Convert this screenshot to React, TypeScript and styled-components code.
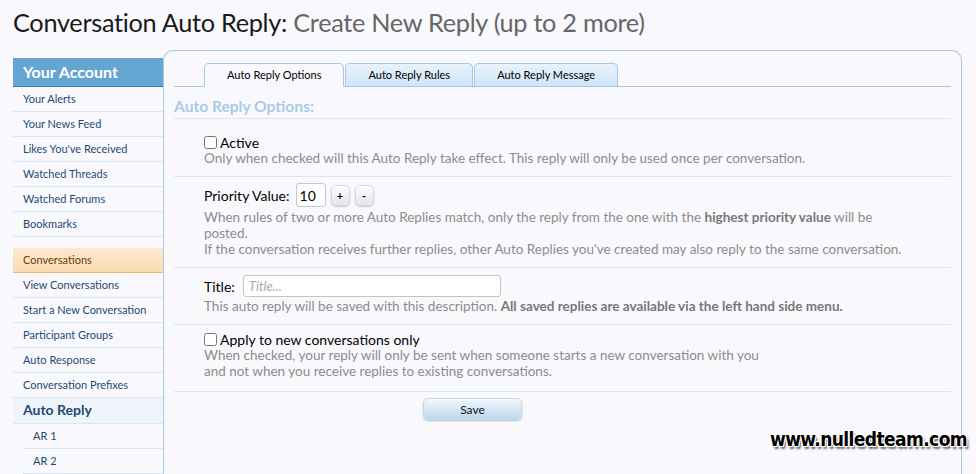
import { useState } from "react";
import styled, { createGlobalStyle } from "styled-components";

const GlobalStyle = createGlobalStyle`
  body {
    margin: 0;
    background: #f9f9fd;
    font-family: "Lato", "DejaVu Sans", sans-serif;
    color: #000;
  }
`;

const accountLinks = [
  "Your Alerts",
  "Your News Feed",
  "Likes You've Received",
  "Watched Threads",
  "Watched Forums",
  "Bookmarks",
];

const conversationLinks = [
  "View Conversations",
  "Start a New Conversation",
  "Participant Groups",
  "Auto Response",
  "Conversation Prefixes",
];

const tabs = ["Auto Reply Options", "Auto Reply Rules", "Auto Reply Message"];

const App = () => {
  const [priority, setPriority] = useState(10);
  const [activeTab, setActiveTab] = useState(0);

  return (
    <Page>
      <GlobalStyle />
      <Title>
        Conversation Auto Reply: <Sub>Create New Reply (up to 2 more)</Sub>
      </Title>
      <Body>
        <Sidebar>
          <SideHeader>Your Account</SideHeader>
          {accountLinks.map((l) => (
            <SideLink key={l}>{l}</SideLink>
          ))}
          <SideGap />
          <SideSection>Conversations</SideSection>
          {conversationLinks.map((l) => (
            <SideLink key={l}>{l}</SideLink>
          ))}
          <SideSub>Auto Reply</SideSub>
          <SideLink indent>AR 1</SideLink>
          <SideLink indent>AR 2</SideLink>
        </Sidebar>
        <Panel>
          <TabBar>
            {tabs.map((t, i) => (
              <Tab key={t} active={i === activeTab} onClick={() => setActiveTab(i)}>
                {t}
              </Tab>
            ))}
          </TabBar>
          <Heading>Auto Reply Options:</Heading>
          <Row>
            <CheckLabel>
              <Check type="checkbox" />
              Active
            </CheckLabel>
            <Hint>
              Only when checked will this Auto Reply take effect. This reply will only be used once per
              conversation.
            </Hint>
          </Row>
          <Row>
            <Inline>
              <Label>Priority Value:</Label>
              <NumInput value={priority} readOnly />
              <Stepper onClick={() => setPriority(priority + 1)}>+</Stepper>
              <Stepper onClick={() => setPriority(priority - 1)}>-</Stepper>
            </Inline>
            <Hint spaced>
              When rules of two or more Auto Replies match, only the reply from the one with the{" "}
              <b>highest priority value</b> will be posted.
              <br />
              If the conversation receives further replies, other Auto Replies you've created may also reply
              to the same conversation.
            </Hint>
          </Row>
          <Row>
            <Inline>
              <Label>Title:</Label>
              <TextInput placeholder="Title..." />
            </Inline>
            <Hint>
              This auto reply will be saved with this description.{" "}
              <b>All saved replies are available via the left hand side menu.</b>
            </Hint>
          </Row>
          <Row last>
            <CheckLabel>
              <Check type="checkbox" />
              Apply to new conversations only
            </CheckLabel>
            <Hint>
              When checked, your reply will only be sent when someone starts a new conversation with you
              <br />
              and not when you receive replies to existing conversations.
            </Hint>
          </Row>
          <Actions>
            <SaveButton>Save</SaveButton>
          </Actions>
          <Watermark>www.nulledteam.com</Watermark>
        </Panel>
      </Body>
    </Page>
  );
};

const Page = styled.div`
  padding: 0 14px 0 13px;
  height: 474px;
  overflow: hidden;
`;

const Title = styled.h1`
  margin: 0;
  height: 50px;
  line-height: 44px;
  font-size: 25.3px;
  font-weight: normal;
  color: #1a1a1a;
  letter-spacing: -0.3px;
`;

const Sub = styled.span`
  color: #666;
`;

const Body = styled.div`
  display: flex;
  align-items: flex-start;
`;

const Sidebar = styled.div`
  width: 150px;
  flex-shrink: 0;
  margin-top: 8px;
`;

const SideHeader = styled.div`
  height: 28px;
  line-height: 28px;
  padding-left: 10px;
  background: #65a5d1;
  border-bottom: 1px solid #3b7bb0;
  color: #fff;
  font-weight: bold;
  font-size: 16px;
`;

const SideLink = styled.div<{ indent?: boolean }>`
  height: 24px;
  line-height: 24px;
  padding-left: 10px;
  margin-left: ${(p) => (p.indent ? "10px" : "0")};
  border-bottom: 1px solid #d7e8f5;
  font-size: 11px;
  color: #1e4a76;
`;

const SideGap = styled.div`
  height: 11px;
`;

const SideSection = styled.div`
  height: 24px;
  line-height: 24px;
  padding-left: 10px;
  background: linear-gradient(#fde9cf, #fbdcb2);
  border-bottom: 1px solid #f6b66b;
  font-size: 11px;
  color: #6b3b10;
`;

const SideSub = styled.div`
  height: 25px;
  line-height: 24px;
  padding-left: 10px;
  background: #eef4fa;
  border-bottom: 1px solid #d7e8f5;
  font-size: 14px;
  font-weight: bold;
  color: #1e4a76;
`;

const Panel = styled.div`
  position: relative;
  flex: 1;
  height: 424px;
  border: 1px solid #a9c8e2;
  border-bottom: none;
  border-radius: 10px 10px 0 0;
  padding: 12px 10px 0 10px;
`;

const TabBar = styled.div`
  display: flex;
  padding-left: 30px;
  border-bottom: 1px solid #a5c8e3;
  height: 23px;
`;

const Tab = styled.div<{ active?: boolean }>`
  height: 22px;
  line-height: 22px;
  margin-right: 1px;
  padding: 0 22px;
  font-size: 11px;
  border: 1px solid #a5c8e3;
  border-bottom: ${(p) => (p.active ? "1px solid #f9f9fd" : "none")};
  border-radius: 5px 5px 0 0;
  background: ${(p) => (p.active ? "#f9f9fd" : "linear-gradient(#e8f3fc, #cfe5f7)")};
  color: #000;
  cursor: pointer;
`;

const Heading = styled.div`
  height: 23px;
  padding-top: 8px;
  line-height: 22px;
  font-size: 15.6px;
  font-weight: bold;
  color: #a9cbe6;
  border-bottom: 1px solid #d7e8f5;
  margin-bottom: 9px;
`;

const Row = styled.div<{ last?: boolean }>`
  padding: 6px 0 ${(p) => (p.last ? "12px" : "10px")} 30px;
  border-bottom: 1px solid #d7e8f5;
`;

const CheckLabel = styled.label`
  display: flex;
  align-items: center;
  font-size: 14px;
  height: 16px;
  gap: 3px;
`;

const Check = styled.input`
  margin: 0;
  width: 13px;
  height: 13px;
`;

const Inline = styled.div`
  display: flex;
  align-items: center;
  gap: 4px;
  height: 24px;
`;

const Label = styled.span`
  font-size: 14px;
  margin-right: 4px;
`;

const Hint = styled.div<{ spaced?: boolean }>`
  font-size: 13.5px;
  color: #8c8c8c;
  line-height: 16px;
  max-width: 705px;
  margin-top: ${(p) => (p.spaced ? "2px" : "0")};

  b {
    font-weight: bold;
    color: #777;
  }
`;

const NumInput = styled.input`
  width: 22px;
  height: 20px;
  padding: 1px 3px;
  margin-left: -2px;
  border: 1px solid #c8c8c8;
  border-radius: 3px;
  font-size: 14px;
  font-family: inherit;
`;

const Stepper = styled.button`
  width: 19px;
  height: 21px;
  padding: 0;
  border: 1px solid #d8d8e4;
  border-radius: 5px;
  background: linear-gradient(#fdfdff, #e4e4ef);
  box-shadow: 0 1px 2px rgba(0, 0, 0, 0.2);
  font-size: 11px;
  font-weight: bold;
  font-family: inherit;
  margin-left: 1px;
`;

const TextInput = styled.input`
  width: 246px;
  height: 16px;
  padding: 2px 5px;
  border: 1px solid #c4c4c4;
  border-radius: 3px;
  font-size: 13px;
  font-family: inherit;
  &::placeholder {
    font-style: italic;
    color: #aaa;
  }
`;

const Actions = styled.div`
  display: flex;
  padding: 6px 0 0 249px;
`;

const SaveButton = styled.button`
  width: 99px;
  height: 22px;
  border: 1px solid #c7d9ea;
  border-radius: 5px;
  background: linear-gradient(#f2f7fc, #bdd8ee);
  box-shadow: 0 1px 2px rgba(0, 0, 0, 0.25);
  font-size: 12px;
  font-family: inherit;
  color: #111;
`;

const Watermark = styled.div`
  position: absolute;
  right: -6px;
  top: 377px;
  font-family: "DejaVu Sans Condensed", "DejaVu Sans", sans-serif;
  font-weight: bold;
  font-size: 19px;
  letter-spacing: -0.6px;
  color: #000;
  text-shadow: 1px 1px 0 #fff, -1px -1px 0 #fff, 1px -1px 0 #fff, -1px 1px 0 #fff, 2px 3px 2px #666;
`;

export default App;
